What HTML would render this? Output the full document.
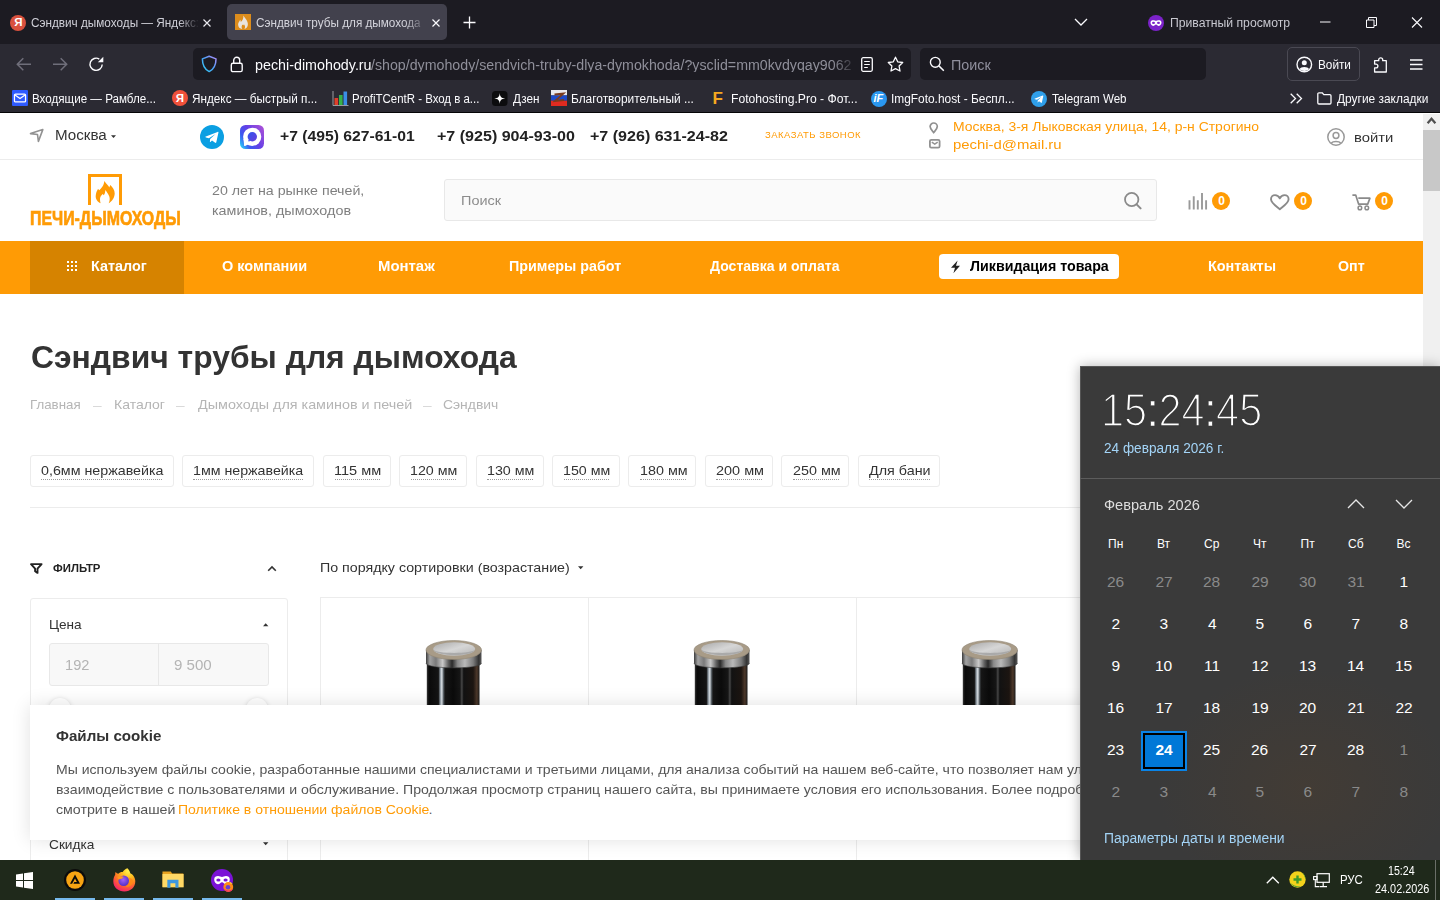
<!DOCTYPE html>
<html lang="ru">
<head>
<meta charset="utf-8">
<title>Сэндвич трубы для дымохода</title>
<style>
html,body{margin:0;padding:0;}
body{width:1440px;height:900px;overflow:hidden;position:relative;background:#fff;font-family:"Liberation Sans",sans-serif;}
.a{position:absolute;}
.t{position:absolute;white-space:pre;line-height:1;transform-origin:0 0;display:block;}
svg{position:absolute;overflow:visible;}
#page{position:absolute;left:0;top:0;width:1423px;height:860px;background:#fff;overflow:hidden;}
.chip{position:absolute;top:455px;height:30px;border:1px solid #ececec;border-radius:3px;background:#fff;}
.ul{position:absolute;height:0;border-bottom:1px dotted #9a9a9a;}
.badge{position:absolute;width:18px;height:18px;border-radius:9px;background:#ff9b05;}
</style>
</head>
<body>

<!-- ================= PAGE ================= -->
<div id="page">
  <!-- top bar -->
  <div class="a" style="left:0;top:159px;width:1423px;height:1px;background:#ececec"></div>
  <!-- search box -->
  <div class="a" style="left:444px;top:179px;width:711px;height:40px;border:1px solid #e8e8e8;border-radius:3px;background:#fafafa"></div>
  <!-- nav -->
  <div class="a" style="left:0;top:241px;width:1423px;height:53px;background:#ff9b05"></div>
  <div class="a" style="left:30px;top:241px;width:154px;height:53px;background:#d68300"></div>
  <div class="a" style="left:939px;top:254px;width:180px;height:25px;background:#fff;border-radius:4px"></div>
  <!-- chips -->
  <div class="chip" style="left:30px;width:142px"></div>
  <div class="chip" style="left:182px;width:130px"></div>
  <div class="chip" style="left:323px;width:66px"></div>
  <div class="chip" style="left:399px;width:66px"></div>
  <div class="chip" style="left:475.5px;width:66px"></div>
  <div class="chip" style="left:552px;width:66px"></div>
  <div class="chip" style="left:628px;width:66px"></div>
  <div class="chip" style="left:705px;width:66px"></div>
  <div class="chip" style="left:781px;width:66px"></div>
  <div class="chip" style="left:858px;width:80px"></div>
  <div class="a" style="left:30px;top:507px;width:1363px;height:1px;background:#ececec"></div>
  <!-- filter box -->
  <div class="a" style="left:30px;top:598px;width:256px;height:300px;border:1px solid #ececec;border-radius:3px"></div>
  <div class="a" style="left:49px;top:643px;width:218px;height:41px;border:1px solid #e8e8e8;border-radius:3px;background:#f8f8f8"></div>
  <div class="a" style="left:158px;top:644px;width:1px;height:41px;background:#e8e8e8"></div>
  <div class="a" style="left:49px;top:698px;width:22px;height:22px;border-radius:11px;background:#fff;box-shadow:0 1px 5px rgba(0,0,0,.18)"></div>
  <div class="a" style="left:246px;top:698px;width:22px;height:22px;border-radius:11px;background:#fff;box-shadow:0 1px 5px rgba(0,0,0,.18)"></div>
  <!-- grid -->
  <div class="a" style="left:320px;top:597px;width:1073px;height:1px;background:#ececec"></div>
  <div class="a" style="left:320px;top:597px;width:1px;height:300px;background:#ececec"></div>
  <div class="a" style="left:588px;top:597px;width:1px;height:300px;background:#ececec"></div>
  <div class="a" style="left:856px;top:597px;width:1px;height:300px;background:#ececec"></div>
  <div class="a" style="left:1124px;top:597px;width:1px;height:300px;background:#ececec"></div>
    <svg style="left:424px;top:638px" width="60" height="72" viewBox="0 0 60 72">
    <defs>
      <linearGradient id="p0b" x1="0" x2="1" y1="0" y2="0">
        <stop offset="0" stop-color="#3a3a3a"/><stop offset=".04" stop-color="#0a0a0a"/><stop offset=".22" stop-color="#141414"/>
        <stop offset=".255" stop-color="#8f9aa3"/><stop offset=".285" stop-color="#dde3e8"/><stop offset=".315" stop-color="#5d656b"/><stop offset=".345" stop-color="#161616"/>
        <stop offset=".5" stop-color="#0b0b0b"/><stop offset=".63" stop-color="#161616"/><stop offset=".665" stop-color="#474747"/>
        <stop offset=".7" stop-color="#121212"/><stop offset=".88" stop-color="#1c1511"/><stop offset=".95" stop-color="#4d382a"/><stop offset="1" stop-color="#1a1a1a"/>
      </linearGradient>
      <linearGradient id="p0c" x1="0" x2="1" y1="0" y2="0">
        <stop offset="0" stop-color="#3c3c3c"/><stop offset=".07" stop-color="#a2a2a2"/><stop offset=".18" stop-color="#7a7a7a"/>
        <stop offset=".3" stop-color="#c9c9c9"/><stop offset=".4" stop-color="#626262"/><stop offset=".47" stop-color="#2a2a2a"/>
        <stop offset=".57" stop-color="#8a8a8a"/><stop offset=".7" stop-color="#b9b9b9"/><stop offset=".85" stop-color="#7c7c7c"/>
        <stop offset=".95" stop-color="#343434"/><stop offset="1" stop-color="#5a5a5a"/>
      </linearGradient>
      <linearGradient id="p0i" x1="0" x2="1" y1="0" y2="1">
        <stop offset="0" stop-color="#a9a9a9"/><stop offset=".5" stop-color="#d6d6d6"/><stop offset="1" stop-color="#b4b4b4"/>
      </linearGradient>
    </defs>
    <rect x="2.8" y="24" width="52.7" height="48" fill="url(#p0b)"/>
    <path d="M2 12 V25 C2 31.5 57.5 31.5 57.5 25 V12 Z" fill="url(#p0c)"/>
    <path d="M2 25 C2 31.5 57.5 31.5 57.5 25" fill="none" stroke="#3a3a3a" stroke-width=".8" opacity=".7"/>
    <ellipse cx="29.75" cy="12" rx="27.75" ry="9.5" fill="#a89b87"/>
    <ellipse cx="29.75" cy="12" rx="27.75" ry="9.5" fill="none" stroke="#8f8474" stroke-width=".6"/>
    <ellipse cx="30.2" cy="11" rx="21" ry="6.7" fill="url(#p0i)"/>
    <path d="M9.5 11.5 C11 16 49.5 16 51 11.5 C50 19 10.5 19 9.5 11.5 Z" fill="#a5a5a5" opacity=".85"/>
  </svg>
  <svg style="left:691.5px;top:638px" width="60" height="72" viewBox="0 0 60 72">
    <defs>
      <linearGradient id="p1b" x1="0" x2="1" y1="0" y2="0">
        <stop offset="0" stop-color="#3a3a3a"/><stop offset=".04" stop-color="#0a0a0a"/><stop offset=".22" stop-color="#141414"/>
        <stop offset=".255" stop-color="#8f9aa3"/><stop offset=".285" stop-color="#dde3e8"/><stop offset=".315" stop-color="#5d656b"/><stop offset=".345" stop-color="#161616"/>
        <stop offset=".5" stop-color="#0b0b0b"/><stop offset=".63" stop-color="#161616"/><stop offset=".665" stop-color="#474747"/>
        <stop offset=".7" stop-color="#121212"/><stop offset=".88" stop-color="#1c1511"/><stop offset=".95" stop-color="#4d382a"/><stop offset="1" stop-color="#1a1a1a"/>
      </linearGradient>
      <linearGradient id="p1c" x1="0" x2="1" y1="0" y2="0">
        <stop offset="0" stop-color="#3c3c3c"/><stop offset=".07" stop-color="#a2a2a2"/><stop offset=".18" stop-color="#7a7a7a"/>
        <stop offset=".3" stop-color="#c9c9c9"/><stop offset=".4" stop-color="#626262"/><stop offset=".47" stop-color="#2a2a2a"/>
        <stop offset=".57" stop-color="#8a8a8a"/><stop offset=".7" stop-color="#b9b9b9"/><stop offset=".85" stop-color="#7c7c7c"/>
        <stop offset=".95" stop-color="#343434"/><stop offset="1" stop-color="#5a5a5a"/>
      </linearGradient>
      <linearGradient id="p1i" x1="0" x2="1" y1="0" y2="1">
        <stop offset="0" stop-color="#a9a9a9"/><stop offset=".5" stop-color="#d6d6d6"/><stop offset="1" stop-color="#b4b4b4"/>
      </linearGradient>
    </defs>
    <rect x="2.8" y="24" width="52.7" height="48" fill="url(#p1b)"/>
    <path d="M2 12 V25 C2 31.5 57.5 31.5 57.5 25 V12 Z" fill="url(#p1c)"/>
    <path d="M2 25 C2 31.5 57.5 31.5 57.5 25" fill="none" stroke="#3a3a3a" stroke-width=".8" opacity=".7"/>
    <ellipse cx="29.75" cy="12" rx="27.75" ry="9.5" fill="#a89b87"/>
    <ellipse cx="29.75" cy="12" rx="27.75" ry="9.5" fill="none" stroke="#8f8474" stroke-width=".6"/>
    <ellipse cx="30.2" cy="11" rx="21" ry="6.7" fill="url(#p1i)"/>
    <path d="M9.5 11.5 C11 16 49.5 16 51 11.5 C50 19 10.5 19 9.5 11.5 Z" fill="#a5a5a5" opacity=".85"/>
  </svg>
  <svg style="left:959.5px;top:638px" width="60" height="72" viewBox="0 0 60 72">
    <defs>
      <linearGradient id="p2b" x1="0" x2="1" y1="0" y2="0">
        <stop offset="0" stop-color="#3a3a3a"/><stop offset=".04" stop-color="#0a0a0a"/><stop offset=".22" stop-color="#141414"/>
        <stop offset=".255" stop-color="#8f9aa3"/><stop offset=".285" stop-color="#dde3e8"/><stop offset=".315" stop-color="#5d656b"/><stop offset=".345" stop-color="#161616"/>
        <stop offset=".5" stop-color="#0b0b0b"/><stop offset=".63" stop-color="#161616"/><stop offset=".665" stop-color="#474747"/>
        <stop offset=".7" stop-color="#121212"/><stop offset=".88" stop-color="#1c1511"/><stop offset=".95" stop-color="#4d382a"/><stop offset="1" stop-color="#1a1a1a"/>
      </linearGradient>
      <linearGradient id="p2c" x1="0" x2="1" y1="0" y2="0">
        <stop offset="0" stop-color="#3c3c3c"/><stop offset=".07" stop-color="#a2a2a2"/><stop offset=".18" stop-color="#7a7a7a"/>
        <stop offset=".3" stop-color="#c9c9c9"/><stop offset=".4" stop-color="#626262"/><stop offset=".47" stop-color="#2a2a2a"/>
        <stop offset=".57" stop-color="#8a8a8a"/><stop offset=".7" stop-color="#b9b9b9"/><stop offset=".85" stop-color="#7c7c7c"/>
        <stop offset=".95" stop-color="#343434"/><stop offset="1" stop-color="#5a5a5a"/>
      </linearGradient>
      <linearGradient id="p2i" x1="0" x2="1" y1="0" y2="1">
        <stop offset="0" stop-color="#a9a9a9"/><stop offset=".5" stop-color="#d6d6d6"/><stop offset="1" stop-color="#b4b4b4"/>
      </linearGradient>
    </defs>
    <rect x="2.8" y="24" width="52.7" height="48" fill="url(#p2b)"/>
    <path d="M2 12 V25 C2 31.5 57.5 31.5 57.5 25 V12 Z" fill="url(#p2c)"/>
    <path d="M2 25 C2 31.5 57.5 31.5 57.5 25" fill="none" stroke="#3a3a3a" stroke-width=".8" opacity=".7"/>
    <ellipse cx="29.75" cy="12" rx="27.75" ry="9.5" fill="#a89b87"/>
    <ellipse cx="29.75" cy="12" rx="27.75" ry="9.5" fill="none" stroke="#8f8474" stroke-width=".6"/>
    <ellipse cx="30.2" cy="11" rx="21" ry="6.7" fill="url(#p2i)"/>
    <path d="M9.5 11.5 C11 16 49.5 16 51 11.5 C50 19 10.5 19 9.5 11.5 Z" fill="#a5a5a5" opacity=".85"/>
  </svg>

    <!-- location plane -->
  <svg style="left:29px;top:128px" width="16" height="15" viewBox="0 0 16 15"><path d="M13.8 1.6 L1.5 5.6 L8.5 6.5 L9.4 13.4 Z" fill="none" stroke="#929292" stroke-width="1.6" stroke-linejoin="round"/></svg>
  <!-- carets -->
  <svg style="left:111px;top:135px" width="6" height="4"><path d="M0 0.3 H5 L2.5 3 Z" fill="#333"/></svg>
  <svg style="left:577.5px;top:565.5px" width="6" height="4"><path d="M0 0.3 H5.4 L2.7 3.2 Z" fill="#333"/></svg>
  <svg style="left:263px;top:622.5px" width="6" height="4"><path d="M0 3.2 H5.4 L2.7 0.3 Z" fill="#333"/></svg>
  <svg style="left:262.5px;top:842px" width="6" height="4"><path d="M0 0.3 H5.4 L2.7 3.2 Z" fill="#333"/></svg>
  <!-- telegram -->
  <svg style="left:200px;top:125px" width="24" height="24" viewBox="0 0 24 24"><circle cx="12" cy="12" r="12" fill="#0b9fe2"/><path d="M5.2 11.8 L17.6 6.9 C18.2 6.7 18.6 7.1 18.4 7.8 L16.3 17.3 C16.2 17.9 15.7 18.1 15.2 17.8 L12 15.5 L10.4 17 C10.2 17.2 9.9 17.1 9.9 16.8 L10.1 14.1 L15.6 9.1 L8.9 13.3 L6 12.4 C5.4 12.2 5.4 11.9 5.2 11.8 Z" fill="#fff"/></svg>
  <!-- max -->
  <svg style="left:240px;top:125px" width="24" height="24" viewBox="0 0 24 24"><defs><linearGradient id="mx" x1="0" y1=".85" x2="1" y2=".2"><stop offset="0" stop-color="#2ccaf8"/><stop offset=".25" stop-color="#3d58f0"/><stop offset=".55" stop-color="#6340e6"/><stop offset="1" stop-color="#a64fd8"/></linearGradient><linearGradient id="mx2" x1="0" y1="0" x2="1" y2="1"><stop offset="0" stop-color="#2f55ee"/><stop offset="1" stop-color="#6a3ddc"/></linearGradient></defs><rect width="24" height="24" rx="5.5" fill="url(#mx)"/><circle cx="12.2" cy="11.8" r="9.1" fill="#fff"/><path d="M3.4 13.5 C3.6 16.5 4.2 18.6 4 20.3 C3.9 21 4.5 21.2 5.1 21 C6.5 20.5 7.5 19.8 8.6 19.6 Z" fill="#fff"/><circle cx="12.3" cy="11.8" r="4.7" fill="url(#mx2)"/><path d="M8.3 14.5 C8.5 15.5 8.3 16.3 8.7 16.5 C9.1 16.6 9.8 16.1 10.5 15.8 Z" fill="#4148e6"/></svg>
  <!-- pin -->
  <svg style="left:929px;top:121.5px" width="10" height="12" viewBox="0 0 10 12"><path d="M4.7 1 a3.6 3.6 0 0 1 3.6 3.6 c0 2.3 -2.3 4.3 -3.6 6 c-1.3 -1.7 -3.6 -3.7 -3.6 -6 a3.6 3.6 0 0 1 3.6 -3.6 Z" fill="none" stroke="#909090" stroke-width="1.7"/></svg>
  <!-- mail -->
  <svg style="left:929px;top:139px" width="12" height="10" viewBox="0 0 12 10"><rect x=".9" y=".9" width="9.7" height="7.7" rx="1.4" fill="none" stroke="#929292" stroke-width="1.8"/><path d="M2.8 3.1 L5.75 5.1 L8.7 3.1" fill="none" stroke="#929292" stroke-width="1.5"/></svg>
  <!-- user -->
  <svg style="left:1327px;top:128px" width="18" height="18" viewBox="0 0 18 18"><circle cx="9" cy="9" r="8.2" fill="none" stroke="#999" stroke-width="1.5"/><circle cx="9" cy="7.5" r="2.9" fill="none" stroke="#999" stroke-width="1.5"/><path d="M4.3 15 C6 12.9 12 12.9 13.7 15" fill="none" stroke="#999" stroke-width="1.5"/></svg>
  <!-- logo -->
  <svg style="left:88px;top:174px" width="35" height="31" viewBox="0 0 35 31"><path d="M1.5 31 V1.5 H32.5 V31" fill="none" stroke="#ff9b05" stroke-width="3"/><path d="M16.3 7 C17.5 9 19 10 20 11.5 C20.6 12.3 21 13 21.3 13.6 C21.5 12.6 22 11.6 22.3 11 C24.5 13 26.8 16 26.7 19.5 C26.6 23.5 24 27.5 20.7 29.3 C21.8 27 22 24.5 21.3 22.5 C20.5 20 18.5 17.5 17.3 16 C17.3 18 16.8 20 15.7 21.3 C15.4 20.8 15.1 20.3 14.7 20 C13 21.5 11.8 23.5 12 25.5 C12 27 12.3 28.3 12.6 29.3 C9.5 28 7.5 25 7.7 22 C7.9 19 8.8 16.8 10 15 C10.4 15.4 10.9 15.8 11.3 16.2 C12.5 15 13.5 14 14.3 12.8 C15.5 11 16.2 9 16.3 7 Z" fill="#ff9b05"/></svg>
  <!-- search icon -->
  <svg style="left:1123px;top:192px" width="20" height="18" viewBox="0 0 20 18"><circle cx="8.7" cy="7.5" r="6.7" fill="none" stroke="#8a8a8a" stroke-width="1.8"/><path d="M13.6 12.4 L17.6 16.4" stroke="#8a8a8a" stroke-width="2" stroke-linecap="round"/></svg>
  <!-- compare -->
  <svg style="left:1188px;top:192px" width="20" height="19" viewBox="0 0 20 19"><path d="M1.5 8.2 V17.6 M5.75 4.3 V17.6 M9.8 8.2 V17.6 M14 1 V17.6 M18.1 8.2 V17.6" stroke="#999" stroke-width="1.9" fill="none"/></svg>
  <div class="badge" style="left:1212px;top:191.5px"></div>
  <!-- heart -->
  <svg style="left:1270px;top:194px" width="20" height="17" viewBox="0 0 20 17"><path d="M9.8 15.2 C6 12 1 8.8 1 5.2 C1 2.7 2.9 1.1 5 1.1 C7 1.1 8.9 2.4 9.8 4.3 C10.7 2.4 12.6 1.1 14.6 1.1 C16.7 1.1 18.6 2.7 18.6 5.2 C18.6 8.8 13.6 12 9.8 15.2 Z" fill="none" stroke="#8a8a8a" stroke-width="1.9" stroke-linejoin="round"/></svg>
  <div class="badge" style="left:1294px;top:191.5px"></div>
  <!-- cart -->
  <svg style="left:1352px;top:194px" width="20" height="17" viewBox="0 0 20 17"><path d="M0.4 1.1 H3.7 L6.6 10.1 H15.7 L17.9 4.2 H6.3" fill="none" stroke="#8a8a8a" stroke-width="1.7" stroke-linejoin="round"/><circle cx="7.9" cy="13.9" r="1.8" fill="none" stroke="#8a8a8a" stroke-width="1.5"/><circle cx="14.8" cy="13.9" r="1.8" fill="none" stroke="#8a8a8a" stroke-width="1.5"/></svg>
  <div class="badge" style="left:1375px;top:191.5px"></div>
  <!-- nav grid dots -->
  <svg style="left:67px;top:261px" width="10" height="10" viewBox="0 0 10 10" fill="#fff"><rect x="0" y="0" width="2" height="2"/><rect x="4" y="0" width="2" height="2"/><rect x="8" y="0" width="2" height="2"/><rect x="0" y="4" width="2" height="2"/><rect x="4" y="4" width="2" height="2"/><rect x="8" y="4" width="2" height="2"/><rect x="0" y="8" width="2" height="2"/><rect x="4" y="8" width="2" height="2"/><rect x="8" y="8" width="2" height="2"/></svg>
  <!-- lightning -->
  <svg style="left:950px;top:260px" width="11" height="14" viewBox="0 0 11 14"><path d="M7.6 0.5 L1 7.7 H5 L3.4 13.3 L10 5.8 H6 Z" fill="#222"/></svg>
  <!-- filter funnel -->
  <svg style="left:30px;top:562.5px" width="13" height="11" viewBox="0 0 13 11"><path d="M1 1.1 H11.6 L7.5 5.7 V9.9 L5.1 8.3 V5.7 Z" fill="none" stroke="#222" stroke-width="1.9" stroke-linejoin="round"/></svg>
  <!-- chevron up -->
  <svg style="left:267px;top:565px" width="10" height="7" viewBox="0 0 10 7"><path d="M1.2 5.8 L5 2 L8.8 5.8" fill="none" stroke="#333" stroke-width="1.6"/></svg>
  <!-- chip underlines -->
  <div class="ul" style="left:41.2px;top:478.5px;width:121.3px"></div>
  <div class="ul" style="left:193.3px;top:478.5px;width:110px"></div>
  <div class="ul" style="left:334.6px;top:478.5px;width:45.4px"></div>
  <div class="ul" style="left:410.6px;top:478.5px;width:45.6px"></div>
  <div class="ul" style="left:487.2px;top:478.5px;width:45.6px"></div>
  <div class="ul" style="left:563.9px;top:478.5px;width:45.5px"></div>
  <div class="ul" style="left:640.2px;top:478.5px;width:45.8px"></div>
  <div class="ul" style="left:716.3px;top:478.5px;width:46.2px"></div>
  <div class="ul" style="left:793px;top:478.5px;width:45.8px"></div>
  <div class="ul" style="left:868.6px;top:478.5px;width:61.2px"></div>

<span class="t" style="left:55.0px;top:128.0px;font-size:14px;color:#333;transform:scaleX(1.0830);">Москва</span>
<span class="t" style="left:280.1px;top:128.0px;font-size:15px;font-weight:700;color:#222;transform:scaleX(1.0461);">+7 (495) 627-61-01</span>
<span class="t" style="left:437.0px;top:128.0px;font-size:15px;font-weight:700;color:#222;transform:scaleX(1.0701);">+7 (925) 904-93-00</span>
<span class="t" style="left:589.5px;top:128.0px;font-size:15px;font-weight:700;color:#222;transform:scaleX(1.0701);">+7 (926) 631-24-82</span>
<span class="t" style="left:764.5px;top:130.4px;font-size:10px;color:#ff9b05;letter-spacing:0.5px;transform:scale(0.9515,0.95);">ЗАКАЗАТЬ ЗВОНОК</span>
<span class="t" style="left:953.1px;top:120.0px;font-size:13.5px;color:#ff9b05;transform:scaleX(1.0336);">Москва, 3-я Лыковская улица, 14, р-н Строгино</span>
<span class="t" style="left:953.0px;top:138.0px;font-size:13.5px;color:#ff9b05;transform:scaleX(1.1021);">pechi-d@mail.ru</span>
<span class="t" style="left:1354.0px;top:131.0px;font-size:13.5px;color:#333;transform:scaleX(1.1000);">войти</span>
<span class="t" style="left:30.1px;top:207.0px;font-size:21px;font-weight:700;color:#ff9b05;transform:scaleX(0.7558);-webkit-text-stroke:.7px #ff9b05;">ПЕЧИ-ДЫМОХОДЫ</span>
<span class="t" style="left:212.0px;top:184.0px;font-size:13px;color:#7f7f7f;transform:scaleX(1.0942);">20 лет на рынке печей,</span>
<span class="t" style="left:212.0px;top:204.0px;font-size:13px;color:#7f7f7f;transform:scaleX(1.1040);">каминов, дымоходов</span>
<span class="t" style="left:461.0px;top:194.0px;font-size:13px;color:#8c8c8c;transform:scaleX(1.1114);">Поиск</span>
<span class="t" style="left:1218.2px;top:195.0px;font-size:12px;font-weight:700;color:#fff;">0</span>
<span class="t" style="left:1300.2px;top:195.0px;font-size:12px;font-weight:700;color:#fff;">0</span>
<span class="t" style="left:1381.2px;top:195.0px;font-size:12px;font-weight:700;color:#fff;">0</span>
<span class="t" style="left:91.1px;top:259.0px;font-size:14px;font-weight:700;color:#fff;transform:scaleX(1.0264);">Каталог</span>
<span class="t" style="left:221.6px;top:259.0px;font-size:14px;font-weight:700;color:#fff;transform:scaleX(1.0358);">О компании</span>
<span class="t" style="left:377.5px;top:259.0px;font-size:14px;font-weight:700;color:#fff;transform:scaleX(1.0654);">Монтаж</span>
<span class="t" style="left:509.1px;top:259.0px;font-size:14px;font-weight:700;color:#fff;transform:scaleX(1.0220);">Примеры работ</span>
<span class="t" style="left:709.6px;top:259.0px;font-size:14px;font-weight:700;color:#fff;transform:scaleX(1.0031);">Доставка и оплата</span>
<span class="t" style="left:970.2px;top:259.0px;font-size:14px;font-weight:700;color:#000;transform:scaleX(1.0176);">Ликвидация товара</span>
<span class="t" style="left:1207.6px;top:259.0px;font-size:14px;font-weight:700;color:#fff;transform:scaleX(1.0297);">Контакты</span>
<span class="t" style="left:1338.1px;top:259.0px;font-size:14px;font-weight:700;color:#fff;transform:scaleX(1.0160);">Опт</span>
<span class="t" style="left:30.6px;top:341.0px;font-size:32px;font-weight:700;color:#333;transform:scaleX(0.9955);">Сэндвич трубы для дымохода</span>
<span class="t" style="left:30.1px;top:398.0px;font-size:13px;color:#b5b5b5;transform:scaleX(1.0229);">Главная</span>
<span class="t" style="left:113.7px;top:398.0px;font-size:13px;color:#b5b5b5;transform:scaleX(1.0783);">Каталог</span>
<span class="t" style="left:93.0px;top:400.0px;font-size:11px;color:#cfcfcf;transform:scaleX(0.7818);">—</span>
<span class="t" style="left:176.3px;top:400.0px;font-size:11px;color:#cfcfcf;transform:scaleX(0.7818);">—</span>
<span class="t" style="left:422.8px;top:400.0px;font-size:11px;color:#cfcfcf;transform:scaleX(0.7818);">—</span>
<span class="t" style="left:197.6px;top:398.0px;font-size:13px;color:#b5b5b5;transform:scaleX(1.1036);">Дымоходы для каминов и печей</span>
<span class="t" style="left:443.1px;top:398.0px;font-size:13px;color:#b5b5b5;transform:scaleX(1.0680);">Сэндвич</span>
<span class="t" style="left:40.7px;top:464.0px;font-size:13px;color:#333;transform:scaleX(1.0973);">0,6мм нержавейка</span>
<span class="t" style="left:192.8px;top:464.0px;font-size:13px;color:#333;transform:scaleX(1.0940);">1мм нержавейка</span>
<span class="t" style="left:334.1px;top:464.0px;font-size:13px;color:#333;transform:scaleX(1.1200);">115 мм</span>
<span class="t" style="left:410.1px;top:464.0px;font-size:13px;color:#333;transform:scaleX(1.0976);">120 мм</span>
<span class="t" style="left:486.7px;top:464.0px;font-size:13px;color:#333;transform:scaleX(1.0976);">130 мм</span>
<span class="t" style="left:563.4px;top:464.0px;font-size:13px;color:#333;transform:scaleX(1.0951);">150 мм</span>
<span class="t" style="left:639.7px;top:464.0px;font-size:13px;color:#333;transform:scaleX(1.1024);">180 мм</span>
<span class="t" style="left:715.8px;top:464.0px;font-size:13px;color:#333;transform:scaleX(1.1122);">200 мм</span>
<span class="t" style="left:792.5px;top:464.0px;font-size:13px;color:#333;transform:scaleX(1.1024);">250 мм</span>
<span class="t" style="left:869.2px;top:464.0px;font-size:13px;color:#333;transform:scaleX(1.1018);">Для бани</span>
<span class="t" style="left:53.4px;top:563.0px;font-size:11px;font-weight:700;color:#222;transform:scaleX(1.0348);">ФИЛЬТР</span>
<span class="t" style="left:320.0px;top:561.0px;font-size:13px;color:#333;transform:scaleX(1.0943);">По порядку сортировки (возрастание)</span>
<span class="t" style="left:49.1px;top:618.0px;font-size:13.5px;color:#333;transform:scaleX(1.0065);">Цена</span>
<span class="t" style="left:65.3px;top:658.0px;font-size:14.5px;color:#b4b4b4;transform:scaleX(1.0087);">192</span>
<span class="t" style="left:174.1px;top:658.0px;font-size:14.5px;color:#b4b4b4;transform:scaleX(1.0400);">9 500</span>
<span class="t" style="left:49.1px;top:838.0px;font-size:13.5px;color:#333;transform:scaleX(1.0136);">Скидка</span>
</div>
<!-- scrollbar -->
<div class="a" style="left:1423px;top:114px;width:17px;height:746px;background:#f0f0f0"></div>
<div class="a" style="left:1423px;top:130px;width:17px;height:61px;background:#c8c8c8"></div>
<svg style="left:1423px;top:114px" width="17" height="14"><path d="M4.6 9.3 L8.5 4.7 L12.4 9.3" fill="none" stroke="#505050" stroke-width="2.2"/></svg>

<!-- ================= COOKIE ================= -->
<div class="a" style="left:30px;top:705px;width:1363px;height:135px;background:#fff;box-shadow:0 0 18px rgba(0,0,0,.12)"></div>
<span class="t" style="left:55.6px;top:729.0px;font-size:14.5px;font-weight:700;color:#333;transform:scaleX(1.0444);">Файлы cookie</span>
<span class="t" style="left:55.8px;top:763.0px;font-size:13px;color:#555;transform:scaleX(1.0801);">Мы используем файлы cookie, разработанные нашими специалистами и третьими лицами, для анализа событий на нашем веб-сайте, что позволяет нам улучшить</span>
<span class="t" style="left:55.8px;top:783.0px;font-size:13px;color:#555;transform:scaleX(1.0850);">взаимодействие с пользователями и обслуживание. Продолжая просмотр страниц нашего сайта, вы принимаете условия его использования. Более подробную</span>
<span class="t" style="left:56.0px;top:803.0px;font-size:13px;color:#555;transform:scaleX(1.0925);">смотрите в нашей</span>
<span class="t" style="left:178.2px;top:803.0px;font-size:13px;color:#ff9b05;transform:scaleX(1.0792);">Политике в отношении файлов Cookie</span>
<span class="t" style="left:428.8px;top:803.0px;font-size:13px;color:#555;">.</span>

<!-- ================= CALENDAR ================= -->
<div class="a" style="left:1080px;top:366px;width:360px;height:494px;background:#3a3a3a;box-shadow:0 0 12px rgba(0,0,0,.3)">
  <div class="a" style="left:0;top:0;width:360px;height:494px;background:radial-gradient(ellipse 150px 120px at 225px 420px, rgba(120,70,20,.13), rgba(120,70,20,0) 100%)"></div>
  <div class="a" style="left:0;top:0;width:359px;height:493px;border-left:1px solid #555;border-top:1px solid #555"></div>
  <div class="a" style="left:0;top:112px;width:360px;height:1px;background:#5c5c5c"></div>
  <div class="a" style="left:61px;top:365px;width:42px;height:36px;border:2px solid #0a84e8;background:#000"></div>
  <div class="a" style="left:65px;top:369px;width:38px;height:32px;background:#0078d7"></div>
</div>
<svg style="left:1347px;top:498px" width="70" height="12"><path d="M1 10 L9 2 L17 10" fill="none" stroke="#e6e6e6" stroke-width="1.3"/><path d="M49 2 L57 10 L65 2" fill="none" stroke="#e6e6e6" stroke-width="1.3"/></svg>
<span class="t" style="left:1100.5px;top:387.0px;font-size:46px;color:#fff;transform:scaleX(0.9000);-webkit-text-stroke:1.7px #3a3a3a;">15<span style="-webkit-text-stroke:.5px #3a3a3a">:</span>24<span style="-webkit-text-stroke:.5px #3a3a3a">:</span>45</span>
<span class="t" style="left:1103.8px;top:441.0px;font-size:14px;color:#a3d4f7;transform:scaleX(0.9719);">24 февраля 2026 г.</span>
<span class="t" style="left:1103.6px;top:497.0px;font-size:15px;color:#dedede;transform:scaleX(0.9732);">Февраль 2026</span>
<span class="t" style="left:1108.0px;top:538.0px;font-size:12px;color:#fff;">Пн</span>
<span class="t" style="left:1157.0px;top:538.0px;font-size:12px;color:#fff;">Вт</span>
<span class="t" style="left:1204.0px;top:538.0px;font-size:12px;color:#fff;">Ср</span>
<span class="t" style="left:1253.0px;top:538.0px;font-size:12px;color:#fff;">Чт</span>
<span class="t" style="left:1300.5px;top:538.0px;font-size:12px;color:#fff;">Пт</span>
<span class="t" style="left:1348.0px;top:538.0px;font-size:12px;color:#fff;">Сб</span>
<span class="t" style="left:1396.5px;top:538.0px;font-size:12px;color:#fff;">Вс</span>
<span class="t" style="left:1107.0px;top:574.0px;font-size:15.5px;color:#8a8a8a;">26</span>
<span class="t" style="left:1155.5px;top:574.0px;font-size:15.5px;color:#8a8a8a;">27</span>
<span class="t" style="left:1203.0px;top:574.0px;font-size:15.5px;color:#8a8a8a;">28</span>
<span class="t" style="left:1251.5px;top:574.0px;font-size:15.5px;color:#8a8a8a;">29</span>
<span class="t" style="left:1299.0px;top:574.0px;font-size:15.5px;color:#8a8a8a;">30</span>
<span class="t" style="left:1347.5px;top:574.0px;font-size:15.5px;color:#8a8a8a;">31</span>
<span class="t" style="left:1399.5px;top:574.0px;font-size:15.5px;color:#fff;">1</span>
<span class="t" style="left:1111.5px;top:616.0px;font-size:15.5px;color:#fff;">2</span>
<span class="t" style="left:1159.5px;top:616.0px;font-size:15.5px;color:#fff;">3</span>
<span class="t" style="left:1208.0px;top:616.0px;font-size:15.5px;color:#fff;">4</span>
<span class="t" style="left:1255.5px;top:616.0px;font-size:15.5px;color:#fff;">5</span>
<span class="t" style="left:1303.5px;top:616.0px;font-size:15.5px;color:#fff;">6</span>
<span class="t" style="left:1351.5px;top:616.0px;font-size:15.5px;color:#fff;">7</span>
<span class="t" style="left:1399.5px;top:616.0px;font-size:15.5px;color:#fff;">8</span>
<span class="t" style="left:1111.5px;top:658.0px;font-size:15.5px;color:#fff;">9</span>
<span class="t" style="left:1155.0px;top:658.0px;font-size:15.5px;color:#fff;">10</span>
<span class="t" style="left:1204.0px;top:658.0px;font-size:15.5px;color:#fff;">11</span>
<span class="t" style="left:1251.5px;top:658.0px;font-size:15.5px;color:#fff;">12</span>
<span class="t" style="left:1299.0px;top:658.0px;font-size:15.5px;color:#fff;">13</span>
<span class="t" style="left:1347.0px;top:658.0px;font-size:15.5px;color:#fff;">14</span>
<span class="t" style="left:1395.0px;top:658.0px;font-size:15.5px;color:#fff;">15</span>
<span class="t" style="left:1107.0px;top:700.0px;font-size:15.5px;color:#fff;">16</span>
<span class="t" style="left:1155.5px;top:700.0px;font-size:15.5px;color:#fff;">17</span>
<span class="t" style="left:1203.0px;top:700.0px;font-size:15.5px;color:#fff;">18</span>
<span class="t" style="left:1251.5px;top:700.0px;font-size:15.5px;color:#fff;">19</span>
<span class="t" style="left:1299.0px;top:700.0px;font-size:15.5px;color:#fff;">20</span>
<span class="t" style="left:1347.5px;top:700.0px;font-size:15.5px;color:#fff;">21</span>
<span class="t" style="left:1395.5px;top:700.0px;font-size:15.5px;color:#fff;">22</span>
<span class="t" style="left:1107.0px;top:742.0px;font-size:15.5px;color:#fff;">23</span>
<span class="t" style="left:1155.5px;top:742.0px;font-size:15.5px;font-weight:700;color:#fff;">24</span>
<span class="t" style="left:1203.0px;top:742.0px;font-size:15.5px;color:#fff;">25</span>
<span class="t" style="left:1251.0px;top:742.0px;font-size:15.5px;color:#fff;">26</span>
<span class="t" style="left:1299.5px;top:742.0px;font-size:15.5px;color:#fff;">27</span>
<span class="t" style="left:1347.0px;top:742.0px;font-size:15.5px;color:#fff;">28</span>
<span class="t" style="left:1399.5px;top:742.0px;font-size:15.5px;color:#8a8a8a;">1</span>
<span class="t" style="left:1111.5px;top:784.0px;font-size:15.5px;color:#8a8a8a;">2</span>
<span class="t" style="left:1159.5px;top:784.0px;font-size:15.5px;color:#8a8a8a;">3</span>
<span class="t" style="left:1208.0px;top:784.0px;font-size:15.5px;color:#8a8a8a;">4</span>
<span class="t" style="left:1255.5px;top:784.0px;font-size:15.5px;color:#8a8a8a;">5</span>
<span class="t" style="left:1303.5px;top:784.0px;font-size:15.5px;color:#8a8a8a;">6</span>
<span class="t" style="left:1351.5px;top:784.0px;font-size:15.5px;color:#8a8a8a;">7</span>
<span class="t" style="left:1399.5px;top:784.0px;font-size:15.5px;color:#8a8a8a;">8</span>
<span class="t" style="left:1104.1px;top:831.0px;font-size:14px;color:#a3d4f7;transform:scaleX(0.9911);">Параметры даты и времени</span>

<!-- ================= BROWSER CHROME ================= -->
<div class="a" style="left:0;top:0;width:1440px;height:44px;background:#1c1b22"></div>
<div class="a" style="left:0;top:44px;width:1440px;height:68px;background:#2b2a33"></div>
<div class="a" style="left:0;top:112px;width:1440px;height:1px;background:#050507"></div>
<div class="a" style="left:227px;top:4px;width:220px;height:36px;background:#42414d;border-radius:5px"></div>
<div class="a" style="left:193px;top:48px;width:718px;height:32px;background:#1c1b22;border-radius:5px"></div>
<div class="a" style="left:920px;top:48px;width:286px;height:32px;background:#1c1b22;border-radius:5px"></div>
<div class="a" style="left:1287px;top:47px;width:71px;height:32px;border:1px solid #4a4953;border-radius:5px"></div>
<!-- tab 1 favicon -->
<div class="a" style="left:10px;top:14.5px;width:16px;height:16px;border-radius:8px;background:#d9513e"></div>
<span class="t" style="left:14.2px;top:17px;font-size:11.5px;font-weight:700;color:#fff">Я</span>
<svg style="left:203px;top:19px" width="8" height="8"><path d="M.5 .5 L7.5 7.5 M7.5 .5 L.5 7.5" stroke="#e8e8ee" stroke-width="1.2" fill="none"/></svg>
<!-- tab 2 favicon -->
<svg style="left:235px;top:14px" width="16" height="16" viewBox="0 0 16 16"><rect width="16" height="16" fill="#dd8d1c"/><path d="M8.3 1.5 C9.2 3.6 12.7 5.8 12.9 10 C13 12.9 11.2 14.7 9.3 14.9 C10.3 13.6 10.4 11.9 8.9 10.2 C8.6 11.4 7.9 11.5 7.6 10.6 C6.4 11.9 6.4 13.7 7.2 14.9 C4.8 14.8 3.1 12.9 3.1 10.4 C3.2 8.4 4.6 7.2 5.2 5.7 C5.7 6.5 5.8 7.3 5.7 8.1 C7.3 7 8.7 4.5 8.3 1.5 Z" fill="#e9e4de"/></svg>
<svg style="left:432px;top:19px" width="8" height="8"><path d="M.5 .5 L7.5 7.5 M7.5 .5 L.5 7.5" stroke="#fbfbfe" stroke-width="1.2" fill="none"/></svg>
<!-- plus -->
<svg style="left:463px;top:16px" width="13" height="13"><path d="M6.5 .5 V12.5 M.5 6.5 H12.5" stroke="#fbfbfe" stroke-width="1.3" fill="none"/></svg>
<!-- tabs chevron -->
<svg style="left:1074px;top:18px" width="14" height="8"><path d="M1 1 L7 7 L13 1" stroke="#fbfbfe" stroke-width="1.3" fill="none"/></svg>
<!-- private mask -->
<svg style="left:1148px;top:14.5px" width="16" height="16" viewBox="0 0 16 16"><circle cx="8" cy="8" r="8" fill="#7b22c9"/><path d="M2.5 7.6 C2.5 5.8 3.8 5.2 5.2 5.2 C6.4 5.2 7.2 5.8 8 5.8 C8.8 5.8 9.6 5.2 10.8 5.2 C12.2 5.2 13.5 5.8 13.5 7.6 C13.5 9.5 12.3 10.9 10.9 10.9 C9.5 10.9 9 9.5 8 9.5 C7 9.5 6.5 10.9 5.1 10.9 C3.7 10.9 2.5 9.5 2.5 7.6 Z" fill="#fff"/><ellipse cx="5.5" cy="7.9" rx="1.5" ry="1.1" fill="#7b22c9"/><ellipse cx="10.5" cy="7.9" rx="1.5" ry="1.1" fill="#7b22c9"/></svg>
<!-- window controls -->
<svg style="left:1320px;top:17px" width="104" height="11"><path d="M0 5 H10.5" stroke="#fbfbfe" stroke-width="1" fill="none"/><path d="M46.5 3 H54 V10.5 H46.5 Z M48.5 3 V.5 H56.5 V8.5 H54" stroke="#fbfbfe" stroke-width="1" fill="none"/><path d="M92 .5 L102 10.5 M102 .5 L92 10.5" stroke="#fbfbfe" stroke-width="1.1" fill="none"/></svg>
<!-- back / forward -->
<svg style="left:16px;top:57px" width="52" height="15"><path d="M15 7.3 H1.5 M7.3 1.3 L1.3 7.3 L7.3 13.3" stroke="#6f6e7a" stroke-width="1.5" fill="none"/><path d="M37 7.3 H50.5 M44.7 1.3 L50.7 7.3 L44.7 13.3" stroke="#6f6e7a" stroke-width="1.5" fill="none"/></svg>
<!-- reload -->
<svg style="left:88px;top:56px" width="17" height="16" viewBox="0 0 17 16"><path d="M14.2 8.5 A6.1 6.1 0 1 1 11.3 3.1" stroke="#fbfbfe" stroke-width="1.4" fill="none"/><path d="M15.3 .8 V6.3 H9.8 Z" fill="#fbfbfe"/></svg>
<!-- shield -->
<svg style="left:201px;top:55px" width="17" height="18" viewBox="0 0 17 18"><defs><linearGradient id="sh" x1="0" y1="1" x2="1" y2="0"><stop offset="0" stop-color="#30d1f5"/><stop offset=".5" stop-color="#4a9ff5"/><stop offset="1" stop-color="#b08cfa"/></linearGradient></defs><path d="M8.2 1.3 L15 3.9 C15 9.8 13.2 14 8.2 16.6 C3.2 14 1.4 9.8 1.4 3.9 Z" fill="none" stroke="url(#sh)" stroke-width="1.5" stroke-linejoin="round"/></svg>
<!-- lock -->
<svg style="left:230px;top:56px" width="14" height="17" viewBox="0 0 14 17"><rect x="1.3" y="7.3" width="10.9" height="8.3" rx="1.6" fill="none" stroke="#fbfbfe" stroke-width="1.4"/><path d="M3.7 7.3 V4.3 a3 3 0 0 1 6 0 V7.3" fill="none" stroke="#fbfbfe" stroke-width="1.4"/></svg>
<!-- reader -->
<svg style="left:861px;top:56.5px" width="12" height="15" viewBox="0 0 12 15"><rect x=".7" y=".7" width="10.6" height="13.6" rx="1.5" fill="none" stroke="#fbfbfe" stroke-width="1.3"/><path d="M3.2 4.5 H8.8 M3.2 7.5 H8.8 M3.2 10.5 H6.8" stroke="#fbfbfe" stroke-width="1.2"/></svg>
<!-- star -->
<svg style="left:887px;top:55.5px" width="17" height="16" viewBox="0 0 17 16"><path d="M8.5 1.2 L10.7 5.8 L15.7 6.5 L12.1 10 L13 15 L8.5 12.6 L4 15 L4.9 10 L1.3 6.5 L6.3 5.8 Z" fill="none" stroke="#fbfbfe" stroke-width="1.3" stroke-linejoin="round"/></svg>
<!-- search magnifier -->
<svg style="left:929px;top:56px" width="16" height="16" viewBox="0 0 16 16"><circle cx="6.3" cy="6.3" r="4.9" fill="none" stroke="#fbfbfe" stroke-width="1.4"/><path d="M9.9 9.9 L14.8 14.8" stroke="#fbfbfe" stroke-width="1.5"/></svg>
<!-- account -->
<svg style="left:1295.5px;top:56px" width="17" height="17" viewBox="0 0 17 17"><circle cx="8.3" cy="8.5" r="7.3" fill="none" stroke="#fbfbfe" stroke-width="1.4"/><circle cx="8.3" cy="6.8" r="2.5" fill="#fbfbfe"/><path d="M3.6 13 C4.6 10.3 12 10.3 13 13 C11.5 15.6 5.1 15.6 3.6 13 Z" fill="#fbfbfe"/></svg>
<!-- extensions -->
<svg style="left:1373px;top:56.5px" width="15" height="16" viewBox="0 0 15 16"><path d="M5.7 3.7 V2.8 a2 2 0 0 1 4 0 V3.7 H13.3 V15 H1.6 V10.9 H3 a1.9 1.9 0 0 0 0 -3.8 H1.6 V3.7 Z" fill="none" stroke="#fbfbfe" stroke-width="1.3" stroke-linejoin="round"/></svg>
<!-- menu -->
<svg style="left:1410px;top:59px" width="13" height="11"><path d="M0 1 H12.5 M0 5.5 H12.5 M0 10 H12.5" stroke="#fbfbfe" stroke-width="1.3"/></svg>
<!-- bookmarks icons -->
<svg style="left:12px;top:90px" width="16" height="16" viewBox="0 0 15 15"><rect width="15" height="15" rx="1" fill="#2f5bff"/><rect x="2.3" y="3.8" width="10.4" height="7.4" rx="1" fill="none" stroke="#fff" stroke-width="1.2"/><path d="M2.8 4.6 L7.5 8 L12.2 4.6" fill="none" stroke="#fff" stroke-width="1.2"/></svg>
<div class="a" style="left:171.5px;top:90px;width:16px;height:16px;border-radius:8px;background:#f0503a"></div>
<span class="t" style="left:175.7px;top:92.5px;font-size:11.5px;font-weight:700;color:#fff">Я</span>
<svg style="left:331.5px;top:90.5px" width="17" height="16" viewBox="0 0 17 16"><path d="M1 0 V14.5 H16.5" stroke="#9a9aa0" stroke-width="1" fill="none"/><rect x="2.5" y="7" width="3.6" height="7" fill="#e0402b"/><rect x="7" y="4" width="3.6" height="10" fill="#35b34a"/><rect x="11.5" y=".5" width="3.6" height="13.5" fill="#3b8ee6"/></svg>
<svg style="left:492px;top:90.5px" width="16" height="15" viewBox="0 0 16 15"><rect width="15.5" height="15" rx="3.5" fill="#0c0c0e"/><path d="M7.75 2 C8 5.8 9.4 7.2 13.2 7.5 C9.4 7.8 8 9.2 7.75 13 C7.5 9.2 6.1 7.8 2.3 7.5 C6.1 7.2 7.5 5.8 7.75 2 Z" fill="#fff"/></svg>
<svg style="left:551px;top:90px" width="16" height="16" viewBox="0 0 16 16"><rect width="16" height="5.4" fill="#e8e8ec"/><rect y="5.4" width="16" height="5.3" fill="#1d49c8"/><rect y="10.7" width="16" height="5.3" fill="#e02b20"/><path d="M3.5 4.5 L12.5 3.5 L4 11 L13 10" fill="none" stroke="#7a3b1e" stroke-width="1.8"/></svg>
<span class="t" style="left:712.5px;top:89.5px;font-size:17px;font-weight:700;color:#f5a81f">F</span>
<div class="a" style="left:870.5px;top:90.5px;width:16px;height:16px;border-radius:8px;background:#2a97f0"></div>
<span class="t" style="left:873.5px;top:93px;font-size:11px;font-weight:700;font-style:italic;color:#fff">iF</span>
<svg style="left:1030.5px;top:90.5px" width="16" height="16" viewBox="0 0 24 24"><circle cx="12" cy="12" r="12" fill="#2f9fea"/><path d="M5.2 11.8 L17.6 6.9 C18.2 6.7 18.6 7.1 18.4 7.8 L16.3 17.3 C16.2 17.9 15.7 18.1 15.2 17.8 L12 15.5 L10.4 17 C10.2 17.2 9.9 17.1 9.9 16.8 L10.1 14.1 L15.6 9.1 L8.9 13.3 L6 12.4 C5.4 12.2 5.4 11.9 5.2 11.8 Z" fill="#fff"/></svg>
<svg style="left:1290px;top:93px" width="13" height="11"><path d="M.7 .7 L5.5 5.5 L.7 10.3 M6.7 .7 L11.5 5.5 L6.7 10.3" stroke="#fbfbfe" stroke-width="1.3" fill="none"/></svg>
<svg style="left:1317px;top:92px" width="15" height="13" viewBox="0 0 15 13"><path d="M.8 2 a1.2 1.2 0 0 1 1.2 -1.2 H5.2 L6.8 2.6 H12.8 a1.2 1.2 0 0 1 1.2 1.2 V10.8 a1.2 1.2 0 0 1 -1.2 1.2 H2 a1.2 1.2 0 0 1 -1.2 -1.2 Z" fill="none" stroke="#fbfbfe" stroke-width="1.3" stroke-linejoin="round"/></svg>

<span class="t" style="left:31.1px;top:17.0px;font-size:12px;color:#cfcfd7;transform:scaleX(0.9788);-webkit-mask-image:linear-gradient(90deg,#000 88%,transparent 100%);">Сэндвич дымоходы — Яндекс:</span>
<span class="t" style="left:256.3px;top:17.0px;font-size:12px;color:#d4d4dc;transform:scaleX(0.9784);-webkit-mask-image:linear-gradient(90deg,#000 90%,rgba(0,0,0,.3) 100%);">Сэндвич трубы для дымохода</span>
<span class="t" style="left:1170.1px;top:17.0px;font-size:12px;color:#c8c8d0;transform:scaleX(1.0162);">Приватный просмотр</span>
<span class="t" style="left:255.1px;top:58.0px;font-size:14px;color:#fbfbfe;transform:scaleX(1.0214);">pechi-dimohody.ru</span>
<span class="t" style="left:371.1px;top:58.0px;font-size:14px;color:#8f8f9a;transform:scaleX(1.0146);-webkit-mask-image:linear-gradient(90deg,#000 96%,rgba(0,0,0,.25) 100%);">/shop/dymohody/sendvich-truby-dlya-dymokhoda/?ysclid=mm0kvdyqay9062</span>
<span class="t" style="left:951.1px;top:58.0px;font-size:14px;color:#8f8f9d;transform:scaleX(1.0237);">Поиск</span>
<span class="t" style="left:1318.3px;top:59.0px;font-size:12px;color:#fbfbfe;transform:scaleX(0.9812);">Войти</span>
<span class="t" style="left:32.0px;top:93.0px;font-size:12px;color:#fbfbfe;transform:scaleX(0.9683);">Входящие — Рамбле...</span>
<span class="t" style="left:191.6px;top:93.0px;font-size:12px;color:#fbfbfe;transform:scaleX(0.9794);">Яндекс — быстрый п...</span>
<span class="t" style="left:352.1px;top:93.0px;font-size:12px;color:#fbfbfe;transform:scaleX(0.9538);">ProfiTCentR - Вход в а...</span>
<span class="t" style="left:513.1px;top:93.0px;font-size:12px;color:#fbfbfe;transform:scaleX(0.9769);">Дзен</span>
<span class="t" style="left:570.6px;top:93.0px;font-size:12px;color:#fbfbfe;transform:scaleX(0.9910);">Благотворительный ...</span>
<span class="t" style="left:730.6px;top:93.0px;font-size:12px;color:#fbfbfe;transform:scaleX(1.0114);">Fotohosting.Pro - Фот...</span>
<span class="t" style="left:890.6px;top:93.0px;font-size:12px;color:#fbfbfe;transform:scaleX(0.9911);">ImgFoto.host - Беспл...</span>
<span class="t" style="left:1051.6px;top:93.0px;font-size:12px;color:#fbfbfe;transform:scaleX(0.9662);">Telegram Web</span>
<span class="t" style="left:1337.3px;top:93.0px;font-size:12px;color:#fbfbfe;transform:scaleX(0.9934);">Другие закладки</span>

<!-- ================= TASKBAR ================= -->
<div class="a" style="left:0;top:860px;width:1440px;height:40px;background:#1f291b"></div>
<div class="a" style="left:55px;top:898px;width:40px;height:2px;background:#76b9ed"></div>
<div class="a" style="left:104px;top:898px;width:40px;height:2px;background:#76b9ed"></div>
<div class="a" style="left:153px;top:898px;width:40px;height:2px;background:#76b9ed"></div>
<div class="a" style="left:202px;top:898px;width:40px;height:2px;background:#76b9ed"></div>
<div class="a" style="left:1435px;top:860px;width:1px;height:40px;background:#6a6f68"></div>
<!-- windows logo -->
<svg style="left:15.5px;top:871.5px" width="17" height="17" viewBox="0 0 17 17"><path d="M0 2.4 L7 1.4 V8 H0 Z M8 1.25 L17 0 V8 H8 Z M0 9 H7 V15.6 L0 14.6 Z M8 9 H17 V17 L8 15.75 Z" fill="#fff"/></svg>
<!-- aimp -->
<svg style="left:64px;top:868.5px" width="22" height="22" viewBox="0 0 22 22"><circle cx="11" cy="11" r="11" fill="#0b0b0b"/><circle cx="11" cy="11" r="8.8" fill="#f7a413"/><path d="M11 5.6 L16 14.8 H9.3 L10.3 13 H12.9 L11 9.4 L8.1 14.8 H6 Z" fill="#0b0b0b"/></svg>
<!-- firefox -->
<svg style="left:112px;top:868px" width="24" height="24" viewBox="0 0 24 24"><defs><radialGradient id="ff1" cx=".68" cy=".12" r="1.05"><stop offset="0" stop-color="#fff44f"/><stop offset=".28" stop-color="#ffbd1f"/><stop offset=".55" stop-color="#ff7a22"/><stop offset=".8" stop-color="#f9335a"/><stop offset="1" stop-color="#e31587"/></radialGradient><radialGradient id="ff2" cx=".45" cy=".4" r=".65"><stop offset="0" stop-color="#a562f5"/><stop offset="1" stop-color="#4b2bc4"/></radialGradient></defs><path d="M15.5 .3 C17 2.2 18 3.5 18.3 5.3 C20.5 6 23.3 9.3 23.3 13.3 C23.3 19.3 18.5 23.6 12.4 23.6 C6.3 23.6 1.3 19.3 1.3 13.3 C1.3 10.3 2.2 8.2 3.2 6.8 C3.1 5.8 3.2 4.8 3.6 4 C4.4 5 5.3 5.5 6.3 5.7 C7.6 4.2 9.3 3.8 10.7 4 C11.8 2.2 13.5 1 15.5 .3 Z" fill="url(#ff1)"/><circle cx="11.7" cy="12.8" r="5.3" fill="url(#ff2)"/><path d="M5.5 9.2 C7.5 7.8 10.5 7.9 12.3 9.3 C10.8 9.3 9.9 10 10.1 10.9 C9 10.5 7.5 10.8 6.8 11.8 C6.2 11 5.8 10 5.5 9.2 Z" fill="#ff9a1f"/><path d="M16.5 9.5 C18.8 12.5 17.5 17.5 13.5 18.6 C17 19.8 21 17 21 12.5 C20 11 18.5 9.8 16.5 9.5 Z" fill="#ff8a16" opacity=".9"/></svg>
<!-- folder -->
<svg style="left:161.5px;top:869.8px" width="22.3" height="18.6" viewBox="0 0 23 19"><path d="M.5 1.5 H9 L10.5 3.5 H22 V17.5 H.5 Z" fill="#e9a220"/><rect x=".5" y="4" width="21.8" height="13.8" fill="#ffd966"/><path d="M5.5 18.3 V10 H17 V18.3 H13.8 V13.5 H8.7 V18.3 Z" fill="#3e97e0"/></svg>
<!-- private firefox -->
<svg style="left:211px;top:868.5px" width="24" height="25" viewBox="0 0 24 25"><circle cx="11" cy="11" r="11" fill="#7a12d6"/><path d="M3.2 10.6 C3.2 8 5 7.1 7 7.1 C8.7 7.1 9.9 8 11 8 C12.1 8 13.3 7.1 15 7.1 C17 7.1 18.8 8 18.8 10.6 C18.8 13.3 17.1 15.3 15.1 15.3 C13.1 15.3 12.4 13.3 11 13.3 C9.6 13.3 8.9 15.3 6.9 15.3 C4.9 15.3 3.2 13.3 3.2 10.6 Z" fill="#fff"/><ellipse cx="7.4" cy="11" rx="2.1" ry="1.6" fill="#7a12d6"/><ellipse cx="14.6" cy="11" rx="2.1" ry="1.6" fill="#7a12d6"/><circle cx="17.3" cy="18" r="4.9" fill="#ff8a16"/><path d="M12.6 19 A4.9 4.9 0 0 0 22 19.5 A6 6 0 0 1 12.6 19 Z" fill="#f0306a"/><circle cx="17" cy="18.2" r="2.3" fill="#6a3fd0"/><path d="M18.5 12.8 C20 13.3 21 14 21.5 15 L19 14.5 Z" fill="#ffd23a"/></svg>
<!-- tray chevron -->
<svg style="left:1266px;top:875.5px" width="14" height="8"><path d="M.8 7.2 L6.8 1.2 L12.8 7.2" stroke="#fff" stroke-width="1.3" fill="none"/></svg>
<!-- yellow-green icon -->
<svg style="left:1288.5px;top:871px" width="17" height="17" viewBox="0 0 17 17"><circle cx="8.5" cy="8.5" r="8.2" fill="#f3d21c"/><path d="M1 11.5 C3 15.5 8 17.5 12.5 15.5 C8 16 4 14.5 1 11.5 Z M13 1.6 C15.5 3 16.8 6 16.5 9 C15.8 6 15 3.5 13 1.6 Z" fill="#5aa332"/><path d="M8.5 4.5 V12.5 M4.5 8.5 H12.5" stroke="#3f9a2a" stroke-width="2.4"/></svg>
<!-- network -->
<svg style="left:1312.5px;top:873px" width="17" height="15" viewBox="0 0 17 15"><rect x="4" y=".7" width="12.3" height="8.6" fill="none" stroke="#fff" stroke-width="1.2"/><path d="M10.2 9.3 V13.3 M6.5 13.6 H14" stroke="#fff" stroke-width="1.2" fill="none"/><rect x=".6" y="3.6" width="3.4" height="3" fill="none" stroke="#fff" stroke-width="1.1"/><path d="M2.3 6.6 V13.6 H6" stroke="#fff" stroke-width="1.1" fill="none"/></svg>

<span class="t" style="left:1340.1px;top:874.0px;font-size:12px;color:#fff;transform:scaleX(0.9500);">РУС</span>
<span class="t" style="left:1388.4px;top:865.0px;font-size:12px;color:#fff;transform:scaleX(0.8862);">15:24</span>
<span class="t" style="left:1374.7px;top:883.0px;font-size:12px;color:#fff;transform:scaleX(0.9051);">24.02.2026</span>

</body>
</html>
